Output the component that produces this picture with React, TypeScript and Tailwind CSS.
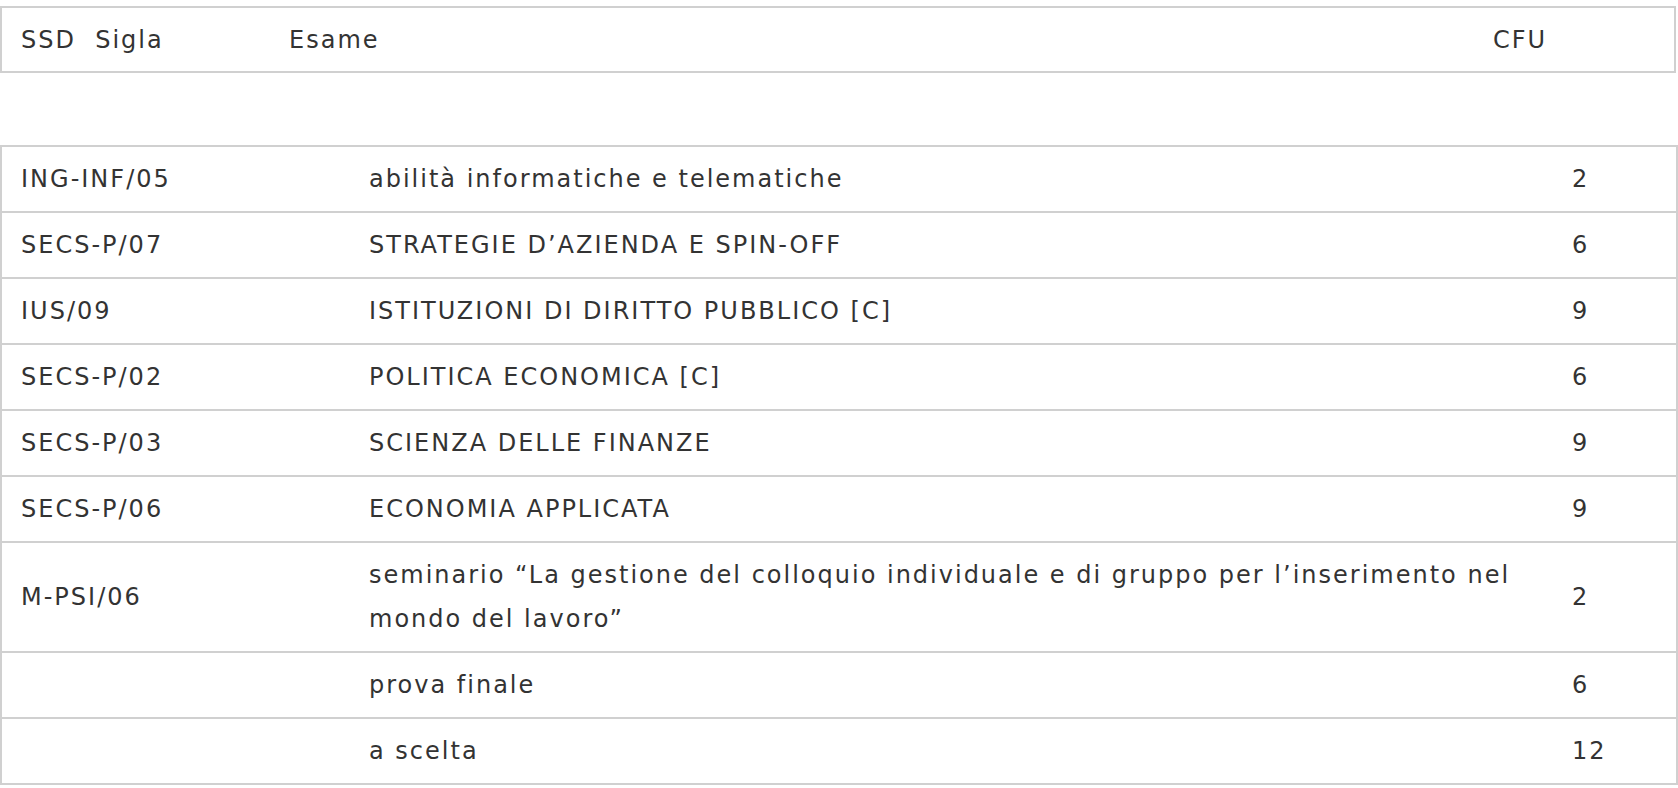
const rows: [string, string, string][] = [
  ["ING-INF/05", "abilità informatiche e telematiche", "2"],
  ["SECS-P/07", "STRATEGIE D’AZIENDA E SPIN-OFF", "6"],
  ["IUS/09", "ISTITUZIONI DI DIRITTO PUBBLICO [C]", "9"],
  ["SECS-P/02", "POLITICA ECONOMICA [C]", "6"],
  ["SECS-P/03", "SCIENZA DELLE FINANZE", "9"],
  ["SECS-P/06", "ECONOMIA APPLICATA", "9"],
];

const cellL = "border-2 border-r-0 border-[#d0d0d0] pl-[19px] align-middle";
const cellM = "border-y-2 border-[#d0d0d0] pl-[19px] align-middle";
const cellR = "border-2 border-l-0 border-[#d0d0d0] pl-[19px] align-middle";

export default function App() {
  return (
    <div
      className="w-[1678px] min-h-[788px] bg-white pt-[6px] text-[24px] tracking-[2px] text-[#333333]"
      style={{ fontFamily: '"DejaVu Sans", "Open Sans", sans-serif' }}
    >
      <div className="flex h-[67px] w-[1676px] items-center border-2 border-[#d0d0d0]">
        <span className="w-[287px] pl-[19px]">SSD&nbsp; Sigla</span>
        <span className="w-[1204px]">Esame</span>
        <span>CFU</span>
      </div>

      <table className="mt-[72px] w-[1676px] table-fixed border-collapse">
        <colgroup>
          <col className="w-[349px]" />
          <col className="w-[1203px]" />
          <col className="w-[124px]" />
        </colgroup>
        <tbody>
          {rows.map(([ssd, esame, cfu]) => (
            <tr key={ssd} className="h-[66px]">
              <td className={cellL}>{ssd}</td>
              <td className={cellM}>{esame}</td>
              <td className={cellR}>{cfu}</td>
            </tr>
          ))}
          <tr className="h-[110px]">
            <td className={cellL}>M-PSI/06</td>
            <td className={cellM + " whitespace-nowrap leading-[44px]"}>
              seminario “La gestione del colloquio individuale e di gruppo per l’inserimento nel
              <br />
              mondo del lavoro”
            </td>
            <td className={cellR}>2</td>
          </tr>
          <tr className="h-[66px]">
            <td className={cellL}></td>
            <td className={cellM}>prova finale</td>
            <td className={cellR}>6</td>
          </tr>
          <tr className="h-[66px]">
            <td className={cellL}></td>
            <td className={cellM}>a scelta</td>
            <td className={cellR}>12</td>
          </tr>
        </tbody>
      </table>
    </div>
  );
}
